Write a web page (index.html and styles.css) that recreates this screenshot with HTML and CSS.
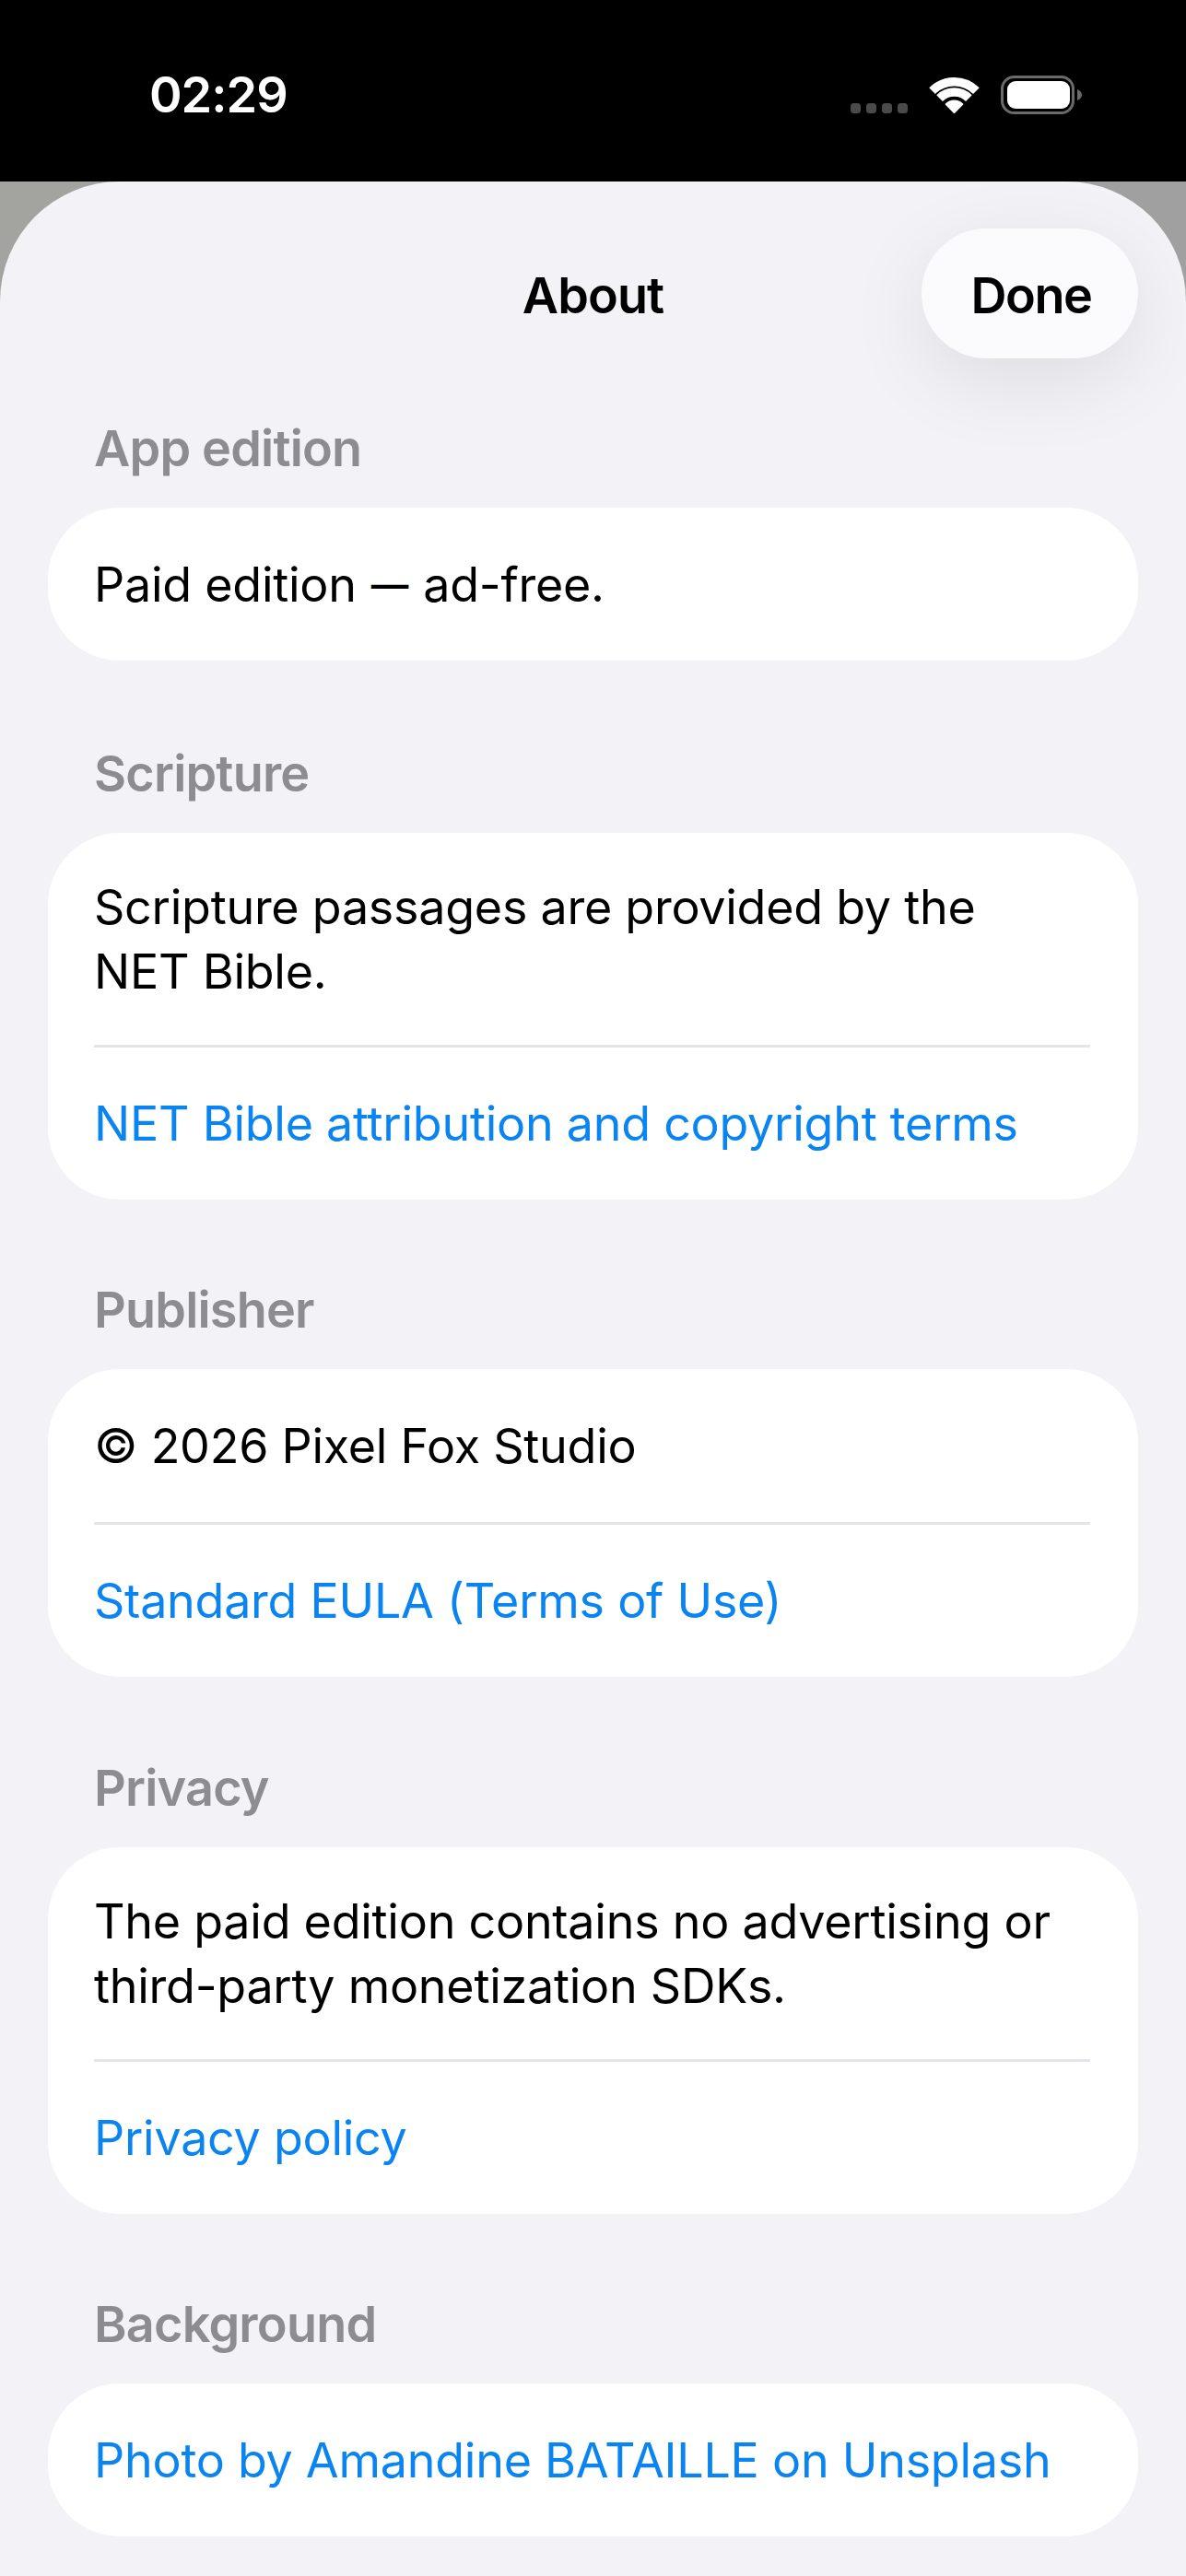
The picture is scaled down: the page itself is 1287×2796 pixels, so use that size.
FILE: index.html
```html
<!DOCTYPE html>
<html lang="en">
<head>
<meta charset="utf-8">
<title>About</title>
<link rel="stylesheet" href="styles.css">
</head>
<body>
<div class="device">
  <header class="status">
    <span class="time">02:29</span>
    <div class="status-icons">
      <svg class="dots" viewBox="0 0 62 11" aria-hidden="true">
        <rect x="0" y="0" width="11" height="11" rx="3.5"/>
        <rect x="17" y="0" width="11" height="11" rx="3.5"/>
        <rect x="34" y="0" width="11" height="11" rx="3.5"/>
        <rect x="51" y="0" width="11" height="11" rx="3.5"/>
      </svg>
      <svg class="wifi" viewBox="0 0 55 41" aria-hidden="true">
        <path class="wifi-arc" d="M3.6 15.6A33.8 33.8 0 0 1 51.4 15.6"/>
        <path class="wifi-arc" d="M11.6 23.6A22.5 22.5 0 0 1 43.4 23.6"/>
        <path class="wifi-tip" d="M27.5 39L18.6 30.1A12.6 12.6 0 0 1 36.4 30.1Z"/>
      </svg>
      <svg class="battery" viewBox="0 0 88 42" aria-hidden="true">
        <rect class="battery-case" x="1.5" y="1.5" width="77" height="39" rx="13"/>
        <rect class="battery-fill" x="7" y="6" width="68" height="30" rx="9"/>
        <path class="battery-nub" d="M83 15C86 16 88 18.500 88 21S86 26 83 27Z"/>
      </svg>
    </div>
  </header>

  <main class="sheet">
    <nav class="nav">
      <span></span>
      <h1 class="title">About</h1>
      <button class="done" type="button">Done</button>
    </nav>

    <section class="group group-first">
      <h2 class="label">App edition</h2>
      <div class="card">
        <p class="row">Paid edition <span class="dash">—</span> ad-free.</p>
      </div>
    </section>

    <section class="group">
      <h2 class="label">Scripture</h2>
      <div class="card">
        <p class="row row-wrap">Scripture passages are provided by the<br>NET Bible.</p>
        <a class="row link" href="#">NET Bible attribution and copyright terms</a>
      </div>
    </section>

    <section class="group">
      <h2 class="label">Publisher</h2>
      <div class="card">
        <p class="row">© 2026 Pixel Fox Studio</p>
        <a class="row link" href="#">Standard EULA (Terms of Use)</a>
      </div>
    </section>

    <section class="group">
      <h2 class="label">Privacy</h2>
      <div class="card">
        <p class="row row-wrap">The paid edition contains no advertising or third-party monetization SDKs.</p>
        <a class="row link" href="#">Privacy policy</a>
      </div>
    </section>

    <section class="group">
      <h2 class="label">Background</h2>
      <div class="card">
        <a class="row link" href="#">Photo by Amandine BATAILLE on Unsplash</a>
      </div>
    </section>
  </main>
</div>
</body>
</html>
```
FILE: styles.css
```css
* { box-sizing: border-box; }

html, body {
  margin: 0;
  padding: 0;
  background: #000;
  overflow: hidden;
}

body {
  font-family: "Inter", "Liberation Sans", sans-serif;
  color: #000;
}

.device {
  width: 1287px;
  height: 2796px;
  display: flex;
  flex-direction: column;
  background: linear-gradient(90deg, #a3a3a0, #a0a0a0);
}

.status {
  height: 197px;
  flex: none;
  background: #000;
  display: flex;
  justify-content: space-between;
  align-items: flex-start;
  padding: 74px 113px 0 162px;
}

.time {
  color: #fff;
  font-size: 54px;
  font-weight: 600;
  line-height: 58px;
  letter-spacing: -1px;
}

.status-icons {
  display: flex;
  align-items: flex-end;
  margin-top: 8px;
}

.dots {
  width: 62px;
  height: 11px;
  margin-right: 23px;
  margin-bottom: 1px;
  fill: #4a4a4a;
}

.wifi {
  width: 55px;
  height: 41px;
  margin-right: 23px;
}

.wifi-arc {
  fill: none;
  stroke: #fff;
  stroke-width: 9.5;
}

.wifi-tip {
  fill: #fff;
  stroke: #fff;
  stroke-width: 2;
  stroke-linejoin: round;
}

.battery {
  width: 88px;
  height: 42px;
}

.battery-case {
  fill: none;
  stroke: #6a6a6a;
  stroke-width: 3;
}

.battery-fill {
  fill: #fff;
}

.battery-nub {
  fill: #6a6a6a;
}

.sheet {
  flex: 1;
  background: #f2f2f7;
  border-radius: 130px 130px 0 0;
  overflow: hidden;
  padding: 51px 52px 0;
}

.nav {
  display: grid;
  grid-template-columns: 1fr auto 1fr;
  align-items: center;
  margin-bottom: 67.5px;
}

.title {
  margin: 4px 0 0;
  font-size: 54px;
  font-weight: 600;
  line-height: 60px;
  letter-spacing: -0.9px;
}

.done {
  justify-self: end;
  width: 235px;
  height: 141px;
  border: 0;
  border-radius: 71px;
  background: #fbfbfe;
  box-shadow: 0 24px 90px rgba(0, 0, 0, 0.09);
  font: inherit;
  font-size: 54px;
  font-weight: 600;
  letter-spacing: -1.5px;
  color: #000;
  padding: 4px 0 0 3px;
}

.group {
  margin-bottom: 90.5px;
}

.group-first {
  margin-bottom: 93px;
}

.label {
  margin: 0 0 34px 50px;
  font-size: 54px;
  font-weight: 600;
  line-height: 60px;
  letter-spacing: -0.8px;
  color: #8c8c91;
}

.card {
  background: #fff;
  border-radius: 78px;
  padding: 0 52px 0 50px;
}

.row {
  display: block;
  margin: 0;
  padding: 49px 0 47px;
  font-size: 52px;
  font-weight: 400;
  line-height: 70px;
  letter-spacing: -0.25px;
}

.row-wrap {
  padding: 46px 0 44px;
}

.row + .row {
  border-top: 3px solid #e5e5e9;
  padding-top: 48px;
}

.dash {
  display: inline-block;
  margin: 0 -4px;
  transform: scaleX(0.78);
}

.link {
  color: #0a84f0;
  text-decoration: none;
}
```
